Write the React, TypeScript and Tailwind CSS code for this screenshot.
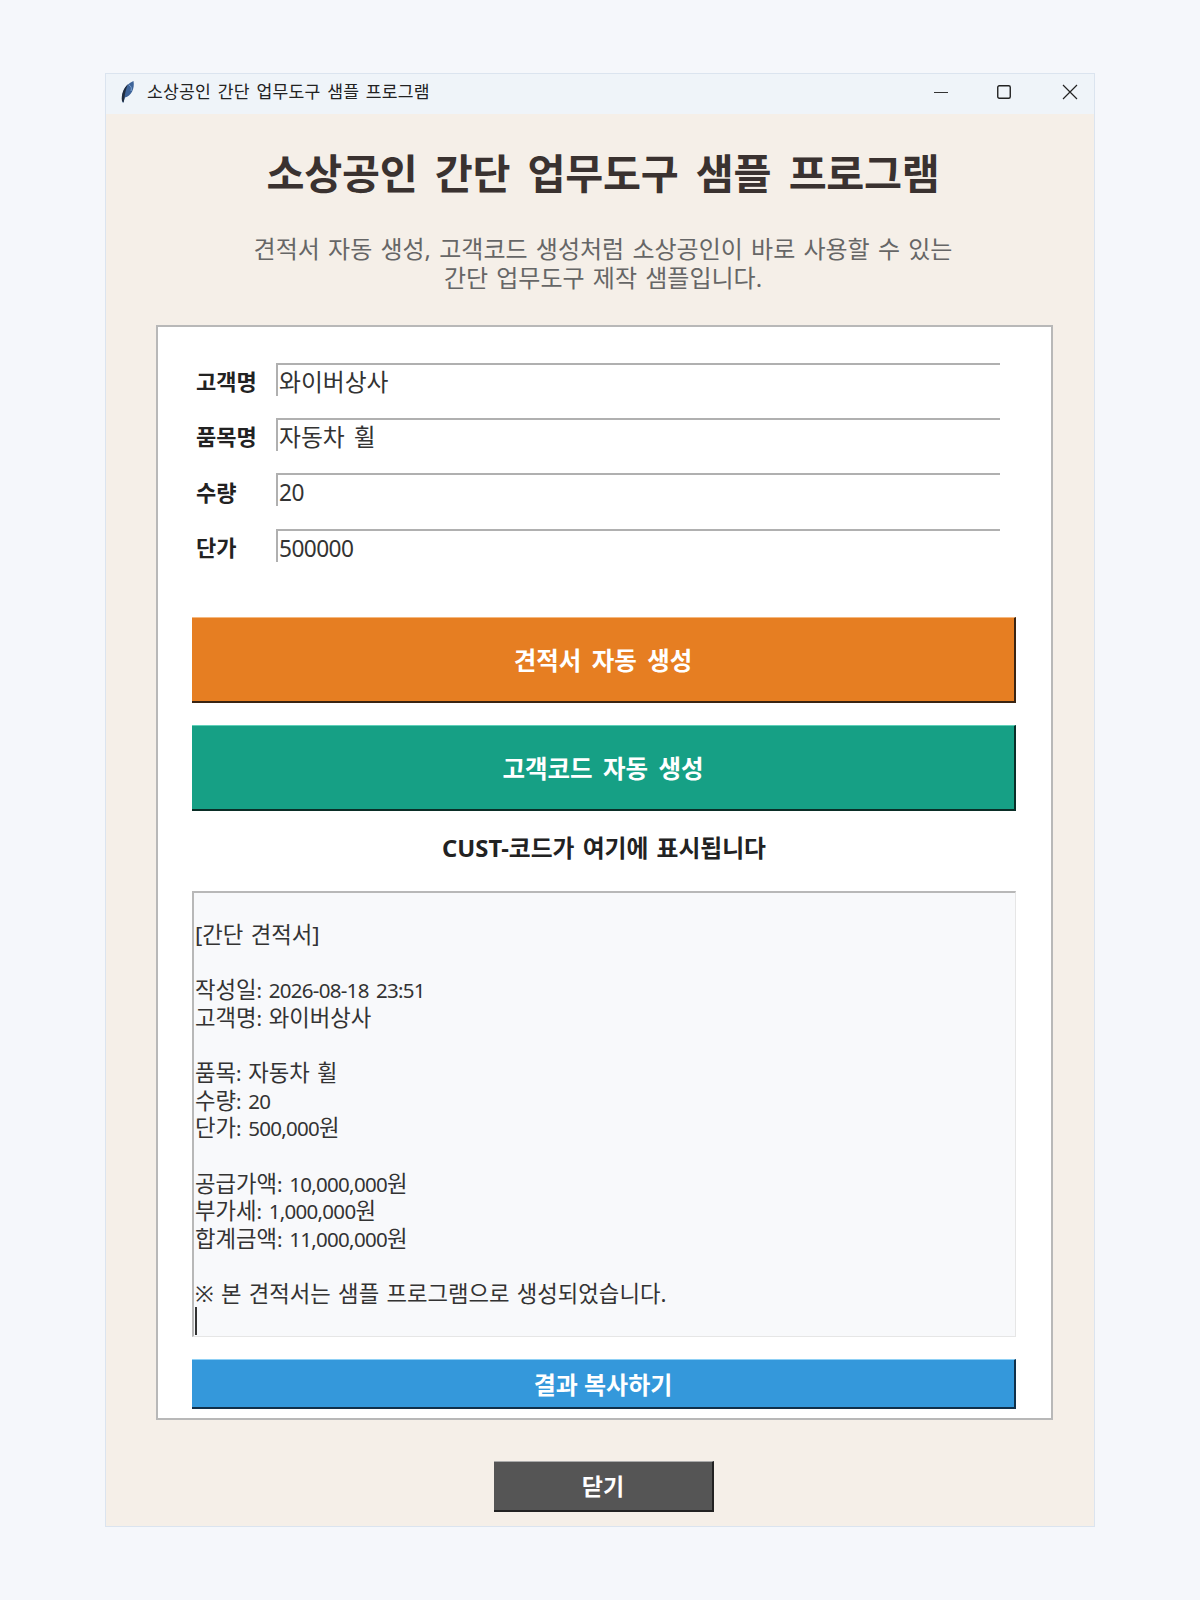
import React from "react";

const fields = [
  { label: "고객명", value: "와이버상사" },
  { label: "품목명", value: "자동차 휠" },
  { label: "수량", value: "20" },
  { label: "단가", value: "500000" },
];

const result = `
[간단 견적서]

작성일: 2026-08-18 23:51
고객명: 와이버상사

품목: 자동차 휠
수량: 20
단가: 500,000원

공급가액: 10,000,000원
부가세: 1,000,000원
합계금액: 11,000,000원

※ 본 견적서는 샘플 프로그램으로 생성되었습니다.`;

// digits in the picture are narrower than the hangul next to them
const Mixed = ({ text, digitClass }: { text: string; digitClass: string }) => (
  <>
    {text.split(/([0-9,:\-]+)/).map((part, i) =>
      i % 2 === 1 ? (
        <span key={i} className={digitClass}>
          {part}
        </span>
      ) : (
        part
      )
    )}
  </>
);

const App = () => {
  return (
    <div className="h-[1600px] bg-[#f5f7fb] pt-[73px] pl-[105px] font-['Noto_Sans','Noto_Sans_CJK_KR',sans-serif]">
      <div className="w-[990px] h-[1454px] border border-[#dbe4ef] bg-[#f5efe8]">
        <div className="h-[40px] pb-[4px] bg-[#eff4f9] flex items-center">
          <svg className="ml-[13px] w-[16px] h-[24px]" viewBox="0 0 16 24">
            <path d="M3.5 22.5 C1.5 15 5 5 14.5 1 C16 9 12 16 6 17.5 L4.5 22.5 Z" fill="#3d6399" />
            <path d="M3 21 C2 15 4.5 8 9 4 C7 9 6 13 5.5 17.5 L4.5 22.5 Z" fill="#1f2b3d" />
            <path d="M10 5 C12 6 13 8 12 11" fill="none" stroke="#7fa3d1" strokeWidth="1" />
          </svg>
          <span className="ml-[12px] text-[17.2px] text-[#222] tracking-[0.2px] [word-spacing:2px]">소상공인 간단 업무도구 샘플 프로그램</span>
          <div className="ml-auto flex items-center">
            <svg className="w-[16px] h-[16px] mr-[47px]" viewBox="0 0 16 16">
              <path d="M1 8.5h14" stroke="#333" strokeWidth="1" />
            </svg>
            <svg className="w-[16px] h-[16px] mr-[50px]" viewBox="0 0 16 16">
              <rect x="1.75" y="1.75" width="12.5" height="12.5" rx="1.5" fill="none" stroke="#222" strokeWidth="1.4" />
            </svg>
            <svg className="w-[16px] h-[16px] mr-[16px]" viewBox="0 0 16 16">
              <path d="M1 1l14 14M15 1L1 15" stroke="#222" strokeWidth="1.2" />
            </svg>
          </div>
        </div>

        <h1 className="mt-[31px] pl-[6px] text-center text-[41.3px] leading-[56px] font-bold text-[#3a3230] tracking-[-0.3px] [word-spacing:7px]">
          소상공인 간단 업무도구 샘플 프로그램
        </h1>
        <p className="mt-[34px] pl-[6px] text-center text-[24px] leading-[28.6px] text-[#666] [word-spacing:2px]">
          견적서 자동 생성, 고객코드 생성처럼 소상공인이 바로 사용할 수 있는
          <br />
          간단 업무도구 제작 샘플입니다.
        </p>

        <div className="mt-[33px] ml-[50px] w-[897px] h-[1095px] border-2 border-[#b8b8b8] bg-white pt-[36px] pl-[34px]">
          <div className="flex flex-col gap-[23.3px]">
            {fields.map((f) => (
              <div key={f.label} className="flex items-center h-[32px]">
                <span className="w-[84px] pl-[4px] pt-[5px] text-[22px] font-bold text-[#222]">{f.label}</span>
                <div className="w-[724px] h-[33px] border-t-2 border-l-2 border-[#b0b0b0] pl-[1px] pt-[1px] text-[23.8px] leading-[33px] text-[#333] [word-spacing:3px]">
                  <Mixed text={f.value} digitClass="text-[22.7px] leading-[22px] tracking-[-0.6px]" />
                </div>
              </div>
            ))}
          </div>

          <button className="mt-[56px] pt-[3px] block w-[824px] h-[86px] bg-[#e67e22] border-t border-t-[#f5b87f] border-r-2 border-r-[#3a2412] border-b-2 border-b-[#3a2412] text-white text-[24.5px] font-semibold [word-spacing:4px]">
            견적서 자동 생성
          </button>
          <button className="mt-[22px] pt-[3px] block w-[824px] h-[86px] bg-[#16a085] border-t border-t-[#5fd0b8] border-r-2 border-r-[#0a2e27] border-b-2 border-b-[#0a2e27] text-white text-[24.5px] font-semibold [word-spacing:4px]">
            고객코드 자동 생성
          </button>

          <div className="w-[824px] mt-[18px] h-[40px] flex items-center justify-center text-[23.8px] font-bold text-[#222] [word-spacing:2px]">
            CUST-코드가 여기에 표시됩니다
          </div>

          <div className="relative mt-[22px] w-[824px] h-[446px] border-t-2 border-l-2 border-t-[#b8b8b8] border-l-[#b8b8b8] border-r border-b border-r-[#e6e6e6] border-b-[#e6e6e6] bg-[#f8f9fb] pl-[1px] pt-[0.5px] text-[22.3px] leading-[27.6px] text-[#333] whitespace-pre [word-spacing:1.5px]">
            <Mixed text={result} digitClass="text-[20.5px] leading-[20px] tracking-[-0.7px]" />
            <div className="absolute left-[1px] top-[414px] w-[2px] h-[28px] bg-[#333]" />
          </div>

          <button className="mt-[22px] pt-[3px] block w-[824px] h-[50px] bg-[#3498db] border-t border-t-[#8fd0f5] border-r-2 border-r-[#10304a] border-b-2 border-b-[#10304a] text-white text-[24px] font-semibold">
            결과 복사하기
          </button>
        </div>

        <button className="mt-[41px] ml-[388px] pt-[1px] block w-[220px] h-[51px] bg-[#555] border-t border-t-[#aaa] border-r-2 border-r-[#222] border-b-2 border-b-[#222] text-white text-[23px] font-semibold">
          닫기
        </button>
      </div>
    </div>
  );
};

export default App;
